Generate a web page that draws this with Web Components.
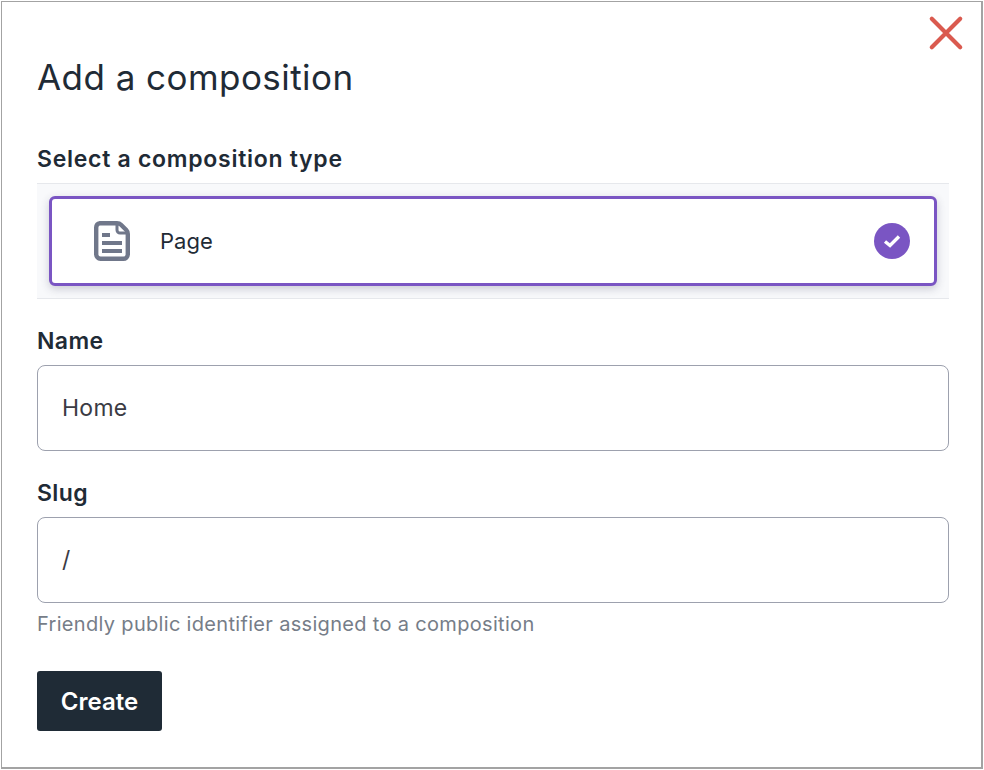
<!DOCTYPE html>
<html>
<head>
<meta charset="utf-8">
<title>Add a composition</title>
<style>
  html, body { margin: 0; padding: 0; background: #fff; }
  body { font-family: Inter, "Liberation Sans", sans-serif; color: #1f2b36; }
</style>
</head>
<body>
<add-composition-dialog>
  <type-picker label="Select a composition type">
    <type-card name="Page"></type-card>
  </type-picker>
  <text-field label="Name" value="Home"></text-field>
  <text-field label="Slug" value="/" hint="Friendly public identifier assigned to a composition"></text-field>
  <action-button>Create</action-button>
</add-composition-dialog>

<script>
class AddCompositionDialog extends HTMLElement {
  constructor() {
    super();
    this.attachShadow({ mode: 'open' });
    this.shadowRoot.innerHTML = `
      <style>
        :host {
          display: block;
          box-sizing: border-box;
          width: 982px;
          height: 768px;
          margin: 1px 0 0 1px;
          border: 1px solid #a3a3a3;
          border-right-width: 2px;
          border-bottom-width: 2px;
          position: relative;
          padding: 0 32px 0 35px;
        }
        h1 {
          margin: 0;
          padding-top: 53px;
          font-size: 35px;
          line-height: 44px;
          font-weight: 400;
          letter-spacing: 0.45px;
        }
        .close {
          position: absolute;
          top: 13px;
          right: 17px;
          width: 36px;
          height: 36px;
          padding: 0;
          border: 0;
          background: none;
        }
        .close svg { display: block; }
      </style>
      <button class="close" aria-label="Close">
        <svg width="36" height="36" viewBox="0 0 36 36">
          <path d="M3.8 3.8 L32.2 32.2 M32.2 3.8 L3.8 32.2" stroke="#da5a4f" stroke-width="4.2" stroke-linecap="round"/>
        </svg>
      </button>
      <h1>Add a composition</h1>
      <slot></slot>
    `;
  }
}

class TypePicker extends HTMLElement {
  constructor() {
    super();
    this.attachShadow({ mode: 'open' });
    this.shadowRoot.innerHTML = `
      <style>
        :host { display: block; margin-top: 45px; }
        .label {
          font-size: 23px;
          line-height: 30px;
          font-weight: 600;
          letter-spacing: 0.72px;
          height: 39px;
        }
        .tray {
          box-sizing: border-box;
          height: 116px;
          padding: 12px;
          background: #f8f9fb;
          border-top: 1px solid #e6e8ec;
          border-bottom: 1px solid #e6e8ec;
        }
      </style>
      <div class="label">${this.getAttribute('label')}</div>
      <div class="tray"><slot></slot></div>
    `;
  }
}

class TypeCard extends HTMLElement {
  constructor() {
    super();
    this.attachShadow({ mode: 'open' });
    this.shadowRoot.innerHTML = `
      <style>
        :host {
          display: flex;
          align-items: center;
          box-sizing: border-box;
          height: 90px;
          padding: 0 24px 0 42px;
          background: #fff;
          border: 3px solid #7a55c3;
          border-radius: 6px;
          box-shadow: 0 3px 8px rgba(60, 60, 90, 0.24);
        }
        svg { display: block; flex: none; }
        .name {
          margin-left: 30px;
          flex: 1;
          font-size: 22px;
          line-height: 30px;
        }
      </style>
      <svg width="36" height="40" viewBox="0 0 36 40">
        <path d="M6 2.2 H23 Q25.5 2.2 27 3.7 L32.3 9 Q33.8 10.5 33.8 13 V33.5 A4.5 4.5 0 0 1 29.3 37.8 H6.5 A4.5 4.5 0 0 1 2.2 33.5 V6.5 A4.5 4.5 0 0 1 6 2.2 Z" fill="none" stroke="#70778a" stroke-width="4.4" stroke-linejoin="round"/>
        <path d="M23 3 V9 A3 3 0 0 0 26 12 H33" fill="none" stroke="#70778a" stroke-width="3"/>
        <path d="M8 12 H16 V16 H8 Z M8 20 H28 V24 H8 Z M8 28 H28 V32 H8 Z" fill="#70778a"/>
      </svg>
      <span class="name">${this.getAttribute('name')}</span>
      <svg width="36" height="36" viewBox="0 0 36 36">
        <circle cx="18" cy="18" r="18" fill="#7a55c3"/>
        <path d="M11 18.5 L16 22.5 L25 13.5" fill="none" stroke="#fff" stroke-width="3.4"/>
      </svg>
    `;
  }
}

class TextField extends HTMLElement {
  constructor() {
    super();
    this.attachShadow({ mode: 'open' });
    const hint = this.getAttribute('hint');
    this.shadowRoot.innerHTML = `
      <style>
        :host { display: block; margin-top: 26px; }
        label {
          display: block;
          font-size: 23px;
          line-height: 32px;
          font-weight: 600;
          letter-spacing: 0.4px;
          height: 40px;
        }
        input {
          display: block;
          box-sizing: border-box;
          width: 100%;
          height: 86px;
          padding: 0 24px;
          border: 1px solid #9da1ae;
          border-radius: 8px;
          background: #fff;
          color: #3b3b44;
          font: 400 23px Inter, "Liberation Sans", sans-serif;
          letter-spacing: 0.25px;
          outline: none;
        }
        .hint {
          margin-top: 6px;
          font-size: 20px;
          line-height: 30px;
          letter-spacing: 0.32px;
          color: #767d88;
        }
      </style>
      <label>${this.getAttribute('label')}</label>
      <input type="text" value="${this.getAttribute('value')}">
      ${hint ? `<div class="hint">${hint}</div>` : ''}
    `;
  }
}

class ActionButton extends HTMLElement {
  constructor() {
    super();
    this.attachShadow({ mode: 'open' });
    this.shadowRoot.innerHTML = `
      <style>
        :host { display: block; margin-top: 32px; }
        button {
          display: block;
          box-sizing: border-box;
          width: 125px;
          height: 60px;
          padding: 0;
          border: 0;
          border-radius: 3px;
          background: #1f2b36;
          color: #fff;
          font: 600 24px Inter, "Liberation Sans", sans-serif;
        }
      </style>
      <button><slot></slot></button>
    `;
  }
}

customElements.define('add-composition-dialog', AddCompositionDialog);
customElements.define('type-picker', TypePicker);
customElements.define('type-card', TypeCard);
customElements.define('text-field', TextField);
customElements.define('action-button', ActionButton);
</script>
</body>
</html>
